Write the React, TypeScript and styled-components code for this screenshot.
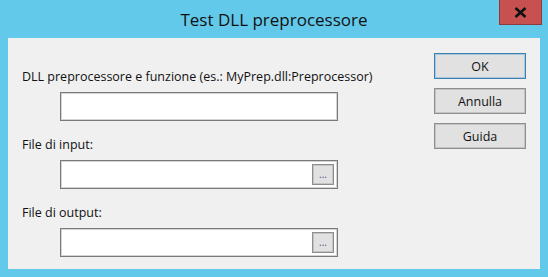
import React from 'react'
import styled, { createGlobalStyle } from 'styled-components'

const GlobalStyle = createGlobalStyle`
  html, body {
    margin: 0;
    padding: 0;
    background: #63c9ea;
  }
  body {
    font-family: "Open Sans", "Noto Sans", sans-serif;
  }
`

const Frame = styled.div`
  width: 548px;
  height: 277px;
  display: flex;
  flex-direction: column;
  background: #63c9ea;
`

const TitleBar = styled.div`
  position: relative;
  height: 38px;
  display: flex;
  align-items: center;
  justify-content: center;
`

const Title = styled.div`
  font-size: 17px;
  color: #111;
  margin-top: 1px;
`

const CloseButton = styled.div`
  position: absolute;
  top: 0;
  right: 6px;
  width: 43px;
  height: 25px;
  background: #c75050;
  border: 1px solid #8c3a3a;
  border-top: none;
  box-sizing: border-box;
  display: flex;
  align-items: center;
  justify-content: center;
`

const Client = styled.div`
  margin: 0 8px;
  height: 231px;
  background: #f0f0f0;
  display: flex;
  justify-content: space-between;
  padding: 15px 14px 0 14px;
  box-sizing: border-box;
`

const Fields = styled.div`
  display: flex;
  flex-direction: column;
  gap: 16px;
  padding-top: 16px;
`

const Field = styled.div`
  display: flex;
  flex-direction: column;
  gap: 7px;
`

const Label = styled.div`
  font-size: 12.5px;
  line-height: 16px;
  color: #111;
`

const InputBox = styled.div`
  margin-left: 38px;
  width: 278px;
  height: 29px;
  box-sizing: border-box;
  background: #fff;
  border: 1px solid #7a7a7a;
  box-shadow: inset 0 0 0 1px #d4d4d4;
  display: flex;
  align-items: center;
  justify-content: flex-end;
  padding-right: 3px;
`

const BrowseButton = styled.div`
  width: 22px;
  height: 21px;
  box-sizing: border-box;
  background: #e1e1e1;
  border: 1px solid #8e8e8e;
  box-shadow: inset 0 0 0 1px #c4c4c4;
  display: flex;
  align-items: center;
  justify-content: center;
  font-size: 10px;
  line-height: 10px;
  color: #5a4a6a;
  padding-bottom: 2px;
`

const Buttons = styled.div`
  display: flex;
  flex-direction: column;
  gap: 9px;
`

const Button = styled.div<{ $default?: boolean }>`
  width: 92px;
  height: 26px;
  box-sizing: border-box;
  background: #e1e1e1;
  border: 1px solid ${(p) => (p.$default ? '#3c7fb1' : '#8e8e8e')};
  box-shadow: inset 0 0 0 1px ${(p) => (p.$default ? '#a9c8e0' : '#c4c4c4')};
  display: flex;
  align-items: center;
  justify-content: center;
  font-size: 12.5px;
  color: #111;
`

type FieldProps = {
  label: string
  browse?: boolean
}

const FileField = ({ label, browse }: FieldProps) => (
  <Field>
    <Label>{label}</Label>
    <InputBox>{browse && <BrowseButton>...</BrowseButton>}</InputBox>
  </Field>
)

export default function App() {
  return (
    <>
      <GlobalStyle />
      <Frame>
        <TitleBar>
          <Title>Test DLL preprocessore</Title>
          <CloseButton>
            <svg width="13" height="11" viewBox="0 0 13 11">
              <path d="M1.5 1 L11.5 10 M11.5 1 L1.5 10" stroke="#111" strokeWidth="2.6" />
            </svg>
          </CloseButton>
        </TitleBar>
        <Client>
          <Fields>
            <FileField label="DLL preprocessore e funzione (es.: MyPrep.dll:Preprocessor)" />
            <FileField label="File di input:" browse />
            <FileField label="File di output:" browse />
          </Fields>
          <Buttons>
            <Button $default>OK</Button>
            <Button>Annulla</Button>
            <Button>Guida</Button>
          </Buttons>
        </Client>
      </Frame>
    </>
  )
}
